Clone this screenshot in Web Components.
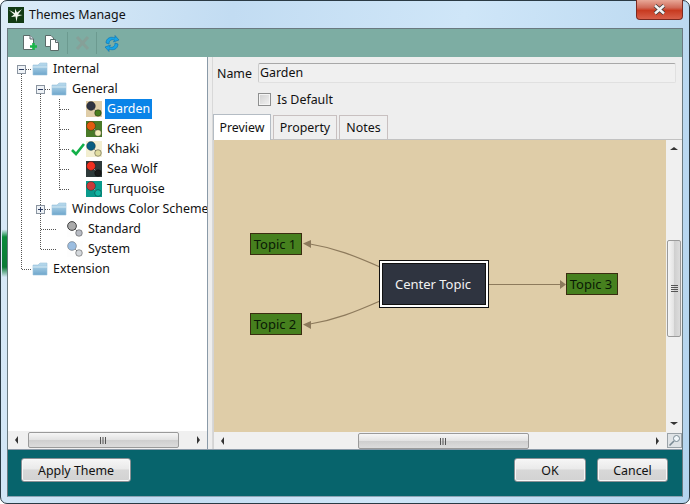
<!DOCTYPE html>
<html>
<head>
<meta charset="utf-8">
<title>Themes Manage</title>
<style>
html,body{margin:0;padding:0;width:690px;height:504px;overflow:hidden}
body{font:12.4px "Noto Sans",sans-serif;color:#111}
</style>
</head>
<body>
<theme-dialog>
    <theme-toolbar slot="toolbar"></theme-toolbar>
    <theme-tree slot="tree">
        <tree-node x="32" kind="folder">Internal</tree-node>
        <tree-node x="51" kind="folder">General</tree-node>
        <tree-node x="86" kind="theme" colors="#dfcda8,#2f3342,#4a7d1e" selected>Garden</tree-node>
        <tree-node x="86" kind="theme" colors="#4a7a28,#e25a10,#f5eebb">Green</tree-node>
        <tree-node x="86" kind="theme" colors="#f2eed0,#0a5f82,#e0dca0" checked>Khaki</tree-node>
        <tree-node x="86" kind="theme" colors="#2e3a3a,#f03020,#1a1a1a">Sea Wolf</tree-node>
        <tree-node x="86" kind="theme" colors="#0a9a8c,#c93a3a,#14b8a4">Turquoise</tree-node>
        <tree-node x="51" kind="folder">Windows Color Schemes</tree-node>
        <tree-node x="67" kind="theme" colors="#fdfdfd,#aaaaaa,#b8bcc4" dark>Standard</tree-node>
        <tree-node x="67" kind="theme" colors="#fdfdfd,#9bbde0,#d4d8dc">System</tree-node>
        <tree-node x="32" kind="folder">Extension</tree-node>
    </theme-tree>
    <theme-editor slot="editor"></theme-editor>
    <dialog-button slot="left" style="width:110px">Apply Theme</dialog-button>
    <dialog-button slot="right" style="width:72px">OK</dialog-button>
    <dialog-button slot="right" style="width:71px">Cancel</dialog-button>
</theme-dialog>

<script>
class ThemeDialog extends HTMLElement{
    constructor(){
        super()
        this.attachShadow({mode: 'open'})
        this.shadowRoot.innerHTML = `
            <style>
                :host{
                    display: flex;
                    flex-direction: column;
                    width: 690px;
                    height: 504px;
                    box-sizing: border-box;
                    position: relative;
                    border: 1px solid #2a3a44;
                    border-radius: 7px;
                    background:
                        linear-gradient(180deg, transparent 45.5%, #0a8a3a 47%, #0a7a34 53%, transparent 55%) 1px 0/5px 100% no-repeat,
                        linear-gradient(100deg, #dcecf8 0%, #c2dcf2 30%, #cfe6f8 60%, #b4d4ee 100%);
                }
                #title{
                    display: flex;
                    align-items: center;
                    height: 27px;
                    padding-left: 7px;
                    gap: 5px;
                    font-size: 12.4px;
                    color: #111;
                }
                #title svg{flex: none}
                #close{
                    position: absolute;
                    top: -1px;
                    right: 6px;
                    width: 47px;
                    height: 20px;
                    box-sizing: border-box;
                    border: 1px solid #7c2a20;
                    border-top: 0;
                    border-radius: 0 0 4px 4px;
                    background: linear-gradient(180deg, #e8a898 0%, #d06a58 40%, #c83a20 55%, #d8604a 100%);
                    display: flex;
                    align-items: center;
                    justify-content: center;
                }
                #frame{
                    display: flex;
                    flex-direction: column;
                    flex: none;
                    height: 469px;
                    margin: 0 6px 0 6px;
                    border: 1px solid #6a7a80;
                    border-bottom-color: #8ca4b4;
                    box-sizing: border-box;
                    background: #eeeeee;
                }
                #main{
                    display: flex;
                    height: 392px;
                    flex: none;
                }
                #left{
                    width: 200px;
                    flex: none;
                    background: #fff;
                    border-right: 1px solid #8a9aa8;
                    box-sizing: border-box;
                }
                #divider{width: 4px;flex: none;background: #eeeeee}
                #right{flex: 1;min-width: 0;border-left: 1px solid #d8d8d8}
                #foot{
                    flex: 1;
                    display: flex;
                    justify-content: space-between;
                    align-items: center;
                    padding: 0 14px 6px 13px;
                    background: #07646c;
                    border-top: 1px solid #8a9aa8;
                }
                #foot div{display: flex;gap: 11px}
            </style>
            <div id="title">
                <svg width="16" height="16" viewBox="0 0 16 16">
                    <rect width="16" height="16" fill="#123a14"/>
                    <path d="M1 3 L7 6 L7 1.5 L9 5.5 L14 2 L10 7.5 L14.5 8 L9.5 9.5 L8.5 15 L7.5 9.5 L3 10 L6 7.5 Z" fill="#f2f6ee"/>
                </svg>
                <span>Themes Manage</span>
            </div>
            <div id="close">
                <svg width="13" height="11" viewBox="0 0 13 11">
                    <path d="M2 1.5 L11 9.5 M11 1.5 L2 9.5" stroke="#3a3a3a" stroke-width="4"/>
                    <path d="M2 1.5 L11 9.5 M11 1.5 L2 9.5" stroke="#f4f4f4" stroke-width="2.4"/>
                </svg>
            </div>
            <div id="frame">
                <slot name="toolbar"></slot>
                <div id="main">
                    <div id="left"><slot name="tree"></slot></div>
                    <div id="divider"></div>
                    <div id="right"><slot name="editor"></slot></div>
                </div>
                <div id="foot">
                    <div><slot name="left"></slot></div>
                    <div><slot name="right"></slot></div>
                </div>
            </div>
        `
    }
}

class ThemeToolbar extends HTMLElement{
    constructor(){
        super()
        this.attachShadow({mode: 'open'})
        this.shadowRoot.innerHTML = `
            <style>
                :host{
                    display: flex;
                    align-items: center;
                    height: 28px;
                    flex: none;
                    padding-left: 14px;
                    background: #7dada3;
                    box-sizing: border-box;
                }
                svg{display: block;flex: none}
                .sep{width: 1px;height: 22px;background: #6c9a90;margin: 0 7px}
                .sep.b{margin: 0 7px 0 6px}
                .gap{width: 8px}
            </style>
            <svg width="15" height="16" viewBox="0 0 15 16">
                <path d="M1.5 .5 H8 L11.5 4 V14.5 H1.5 Z" fill="#fff" stroke="#5a6a68"/>
                <path d="M8 .5 V4 H11.5" fill="#dde" stroke="#5a6a68"/>
                <path d="M8 11.5 H15 M11.5 8 V15" stroke="#19b54a" stroke-width="2.6"/>
            </svg>
            <div class="gap"></div>
            <svg width="15" height="16" viewBox="0 0 15 16">
                <path d="M.5 .5 H6 L8.5 3 V11.5 H.5 Z" fill="#fff" stroke="#5a6a68"/>
                <path d="M5.5 4.5 H10.5 L13.5 7.5 V15.5 H5.5 Z" fill="#fff" stroke="#5a6a68"/>
                <path d="M10.5 4.5 V7.5 H13.5" fill="#dde" stroke="#5a6a68"/>
            </svg>
            <div class="sep"></div>
            <svg width="15" height="16" viewBox="0 0 15 16">
                <path d="M2 2 L13 14 M13 2 L2 14" stroke="#86a098" stroke-width="3"/>
            </svg>
            <div class="sep b"></div>
            <svg width="16" height="17" viewBox="0 0 16 17">
                <path d="M2 8 C2 3 7 1 11 3 L11 .5 L15 5 L9.5 7 L10.5 5 C8 4 5 5 5 9 Z" fill="#19a4e4" stroke="#0a70b0" stroke-width=".6"/>
                <path d="M14 9 C14 14 9 16 5 14 L5 16.5 L1 12 L6.5 10 L5.5 12 C8 13 11 12 11 8 Z" fill="#19a4e4" stroke="#0a70b0" stroke-width=".6"/>
            </svg>
        `
    }
}

class TreeNode extends HTMLElement{
    constructor(){
        super()
        this.attachShadow({mode: 'open'})
    }
    connectedCallback(){
        const x = +this.getAttribute('x') - 8
        const kind = this.getAttribute('kind')
        let icon = ''
        if(kind === 'folder'){
            icon = `<svg width="16" height="14" viewBox="0 0 16 14">
                <defs><linearGradient id="f" x1="0" y1="0" x2="0" y2="1">
                    <stop offset="0" stop-color="#bcdcee"/><stop offset="1" stop-color="#6ea6cc"/>
                </linearGradient></defs>
                <path d="M1 3 H6 L8 1 H15 V13 H1 Z" fill="url(#f)" stroke="#9cc4dc" stroke-width=".6"/>
                <path d="M1 5 H15" stroke="#d6eaf4"/>
            </svg>`
        }else{
            const [bg, a, b] = this.getAttribute('colors').split(',')
            const ring = this.hasAttribute('dark') ? '#222' : 'rgba(0,0,0,.35)'
            icon = `<svg width="16" height="16" viewBox="0 0 16 16">
                <rect width="16" height="16" fill="${bg}"/>
                <path d="M5 5 L12 12" stroke="#999" stroke-width="1"/>
                <circle cx="5" cy="5" r="4.4" fill="${a}" stroke="${ring}" stroke-width=".8"/>
                <circle cx="12" cy="12" r="3.3" fill="${b}" stroke="rgba(0,0,0,.45)" stroke-width=".8"/>
            </svg>`
        }
        const check = this.hasAttribute('checked')
            ? `<svg id="check" width="14" height="13" viewBox="0 0 14 13"><path d="M1 7 L5 11 L13 1" fill="none" stroke="#12b048" stroke-width="2.6"/></svg>`
            : ''
        this.shadowRoot.innerHTML = `
            <style>
                :host{
                    display: flex;
                    align-items: center;
                    height: 20px;
                    padding-left: ${x}px;
                    white-space: nowrap;
                    position: relative;
                }
                svg{display: block;flex: none}
                #check{position: absolute;left: ${x - 15}px;top: 4px}
                #label{
                    margin-left: 3px;
                    padding: 0 2px;
                    line-height: 20px;
                    height: 20px;
                }
                :host([selected]) #label{background: #0a84e8;color: #fff}
            </style>
            ${check}${icon}<span id="label"><slot></slot></span>
        `
    }
}

class ThemeTree extends HTMLElement{
    constructor(){
        super()
        this.attachShadow({mode: 'open'})
        const box = (x, y, plus) => `
            <rect x="${x + .5}" y="${y + .5}" width="8" height="8" fill="#eef2f6" stroke="#8a94a0"/>
            <path d="M${x + 2} ${y + 4.5} H${x + 7}${plus ? ` M${x + 4.5} ${y + 2} V${y + 7}` : ''}" stroke="#2a3a60"/>`
        this.shadowRoot.innerHTML = `
            <style>
                :host{
                    display: flex;
                    flex-direction: column;
                    height: 392px;
                    position: relative;
                }
                #nodes{
                    flex: 1;
                    min-height: 0;
                    overflow: hidden;
                    padding-top: 2px;
                }
                #lines{position: absolute;left: 0;top: 0;pointer-events: none}
                path.dot{fill: none;stroke: #555;stroke-dasharray: 1 1;shape-rendering: crispEdges}
            </style>
            <div id="nodes"><slot></slot></div>
            <svg id="lines" width="62" height="230" viewBox="8 57 62 230">
                <path class="dot" d="M21.5 74 V270 M22 269.5 H32 M26 69.5 H32 M40.5 94 V250 M41 249.5 H56 M45 89.5 H51 M45 209.5 H51 M41 229.5 H56 M59.5 99 V190 M60 109.5 H70 M60 129.5 H70 M60 149.5 H70 M60 169.5 H70 M60 189.5 H70"/>
                ${box(17, 65, false)}${box(36, 85, false)}${box(36, 205, true)}
            </svg>
            <window-scrollbar start="3" size="151"></window-scrollbar>
        `
    }
}

class WindowScrollbar extends HTMLElement{
    constructor(){
        super()
        this.attachShadow({mode: 'open'})
    }
    connectedCallback(){
        const vertical = this.hasAttribute('vertical')
        const start = this.getAttribute('start')
        const size = this.getAttribute('size')
        const a = vertical ? 'M0 3 L8 3 L4 0 Z' : 'M3 0 L3 8 L0 4 Z'
        const b = vertical ? 'M0 0 L8 0 L4 3 Z' : 'M0 0 L0 8 L3 4 Z'
        const w = vertical ? 8 : 3, h = vertical ? 3 : 8
        this.shadowRoot.innerHTML = `
            <style>
                :host{
                    display: flex;
                    flex: none;
                    flex-direction: ${vertical ? 'column' : 'row'};
                    align-items: center;
                    background: #f0f0f0;
                    box-sizing: border-box;
                    ${vertical ? 'width: 16px;' : 'height: 18px;'}
                }
                .btn{
                    flex: none;
                    ${vertical ? 'height: 17px;width: 100%;' : 'width: 17px;height: 100%;'}
                    display: flex;
                    align-items: center;
                    justify-content: center;
                }
                #track{flex: 1;align-self: stretch;min-width: 0;min-height: 0;display: flex;${vertical ? 'flex-direction: column;' : ''}}
                #thumb{
                    box-sizing: border-box;
                    ${vertical ? `margin: ${start}px 1px 0;height: ${size}px;` : `margin: 1px 0 1px ${start}px;width: ${size}px;`}
                    border: 1px solid #9a9a9a;
                    border-radius: 2px;
                    background: linear-gradient(${vertical ? '90deg' : '180deg'}, #f6f6f6, #e2e2e2 50%, #cfcfcf 52%, #dcdcdc);
                    display: flex;
                    align-items: center;
                    justify-content: center;
                }
                svg{display: block}
            </style>
            <div class="btn"><svg width="${w}" height="${h}" viewBox="0 0 ${w} ${h}"><path d="${a}" fill="#333"/></svg></div>
            <div id="track"><div id="thumb">
                ${vertical
                    ? `<svg width="7" height="7" viewBox="0 0 7 7"><path d="M0 .5 H7 M0 2.5 H7 M0 4.5 H7 M0 6.5 H7" stroke="#555"/></svg>`
                    : `<svg width="7" height="7" viewBox="0 0 7 7"><path d="M.5 0 V7 M3 0 V7 M5.5 0 V7" stroke="#555"/></svg>`}
            </div></div>
            <div class="btn"><svg width="${w}" height="${h}" viewBox="0 0 ${w} ${h}"><path d="${b}" fill="#333"/></svg></div>
        `
    }
}

class ThemeEditor extends HTMLElement{
    constructor(){
        super()
        this.attachShadow({mode: 'open'})
        this.shadowRoot.innerHTML = `
            <style>
                :host{
                    display: flex;
                    flex-direction: column;
                    height: 392px;
                    box-sizing: border-box;
                }
                #nameRow{
                    display: flex;
                    align-items: center;
                    height: 20px;
                    margin: 6px 6px 0 4px;
                    gap: 6px;
                }
                #input{
                    flex: 1;
                    height: 20px;
                    box-sizing: border-box;
                    border: 1px solid #e0e0e0;
                    border-top-color: #a8a8a8;
                    border-left-color: #cccccc;
                    border-radius: 2px;
                    padding-left: 1px;
                    line-height: 18px;
                    background: #f0f0f0;
                }
                #defaultRow{
                    display: flex;
                    align-items: center;
                    gap: 6px;
                    height: 16px;
                    margin: 8px 0 0 45px;
                }
                #box{
                    width: 13px;
                    height: 13px;
                    box-sizing: border-box;
                    border: 1px solid #8e8f8f;
                    background: linear-gradient(135deg, #d0d0d0, #f2f2f2);
                    box-shadow: inset 0 0 0 1px #f4f4f4;
                }
                #tabs{
                    display: flex;
                    align-items: flex-end;
                    height: 25px;
                    margin-top: 7px;
                    padding-left: 0;
                    gap: 2px;
                    border-bottom: 1px solid #c2c2c2;
                }
                .tab{
                    height: 24px;
                    box-sizing: border-box;
                    border: 1px solid #c8c0c0;
                    border-bottom: 0;
                    background: #efefef;
                    display: flex;
                    align-items: center;
                    justify-content: center;
                }
                .tab.on{height: 26px;margin-bottom: -1px;background: #fff;border-color: #b4bcc4}
                #body{
                    display: grid;
                    grid-template-columns: 1fr 16px;
                    grid-template-rows: 1fr 17px;
                    flex: 1;
                    min-height: 0;
                    border-left: 1px solid #d4d4d4;
                }
                #corner{
                    display: flex;
                    align-items: center;
                    justify-content: center;
                    background: #f0f0f0;
                }
                #corner svg{display: block}
            </style>
            <div id="nameRow"><span>Name</span><div id="input">Garden</div></div>
            <div id="defaultRow"><div id="box"></div><span>Is Default</span></div>
            <div id="tabs">
                <div class="tab on" style="width:58px">Preview</div>
                <div class="tab" style="width:64px">Property</div>
                <div class="tab" style="width:49px">Notes</div>
            </div>
            <div id="body">
                <map-preview></map-preview>
                <window-scrollbar vertical start="83" size="97"></window-scrollbar>
                <window-scrollbar start="127" size="171"></window-scrollbar>
                <div id="corner">
                    <svg width="15" height="15" viewBox="0 0 15 15">
                        <rect x=".5" y=".5" width="14" height="14" fill="#dfe3e6" stroke="#9aa2a8"/>
                        <circle cx="9.5" cy="5.5" r="3" fill="#f0f6fa" stroke="#7a8a94"/>
                        <path d="M7 8 L2.5 12.5" stroke="#7a8a94" stroke-width="1.6"/>
                    </svg>
                </div>
            </div>
        `
    }
}

class MapTopic extends HTMLElement{
    constructor(){
        super()
        this.attachShadow({mode: 'open'})
        this.shadowRoot.innerHTML = `
            <style>
                :host{
                    position: absolute;
                    display: flex;
                    align-items: center;
                    justify-content: center;
                    box-sizing: border-box;
                    width: 52px;
                    height: 22px;
                    padding: 0 2px 1px 0;
                    background: #46801e;
                    border: 1px solid #3a2c10;
                    color: #0a1a05;
                    font-size: 13px;
                    white-space: nowrap;
                }
                :host([center]){
                    width: 108px;
                    height: 46px;
                    background: #2f3440;
                    border: 2px solid #fff;
                    outline: 1px solid #111;
                    outline-offset: -3px;
                    box-shadow: 0 0 0 1px #111;
                    color: #f2f2f2;
                }
            </style>
            <slot></slot>
        `
    }
}

class MapPreview extends HTMLElement{
    constructor(){
        super()
        this.attachShadow({mode: 'open'})
        this.shadowRoot.innerHTML = `
            <style>
                :host{
                    display: block;
                    position: relative;
                    background: #dfcda8;
                    overflow: hidden;
                    min-height: 0;
                }
                svg{position: absolute;left: 0;top: 0}
            </style>
            <svg width="451" height="291" viewBox="214 140 451 291">
                <g fill="none" stroke="#8d7a5c" stroke-width="1.2">
                    <path d="M380 267 C355 256 335 248 310 244"/>
                    <path d="M380 301 C355 312 335 320 310 324"/>
                    <path d="M488 284.5 H560"/>
                </g>
                <g fill="#8d7a5c">
                    <path d="M303 243.5 L311 240 L311 248 Z"/>
                    <path d="M303 324.5 L311 321 L311 329 Z"/>
                    <path d="M566 284.5 L560 280 L560 289 Z"/>
                </g>
            </svg>
            <map-topic style="left:36px;top:93px">Topic 1</map-topic>
            <map-topic style="left:36px;top:173px">Topic 2</map-topic>
            <map-topic center style="left:166px;top:121px">Center Topic</map-topic>
            <map-topic style="left:352px;top:133px">Topic 3</map-topic>
        `
    }
}

class DialogButton extends HTMLElement{
    constructor(){
        super()
        this.attachShadow({mode: 'open'})
        this.shadowRoot.innerHTML = `
            <style>
                :host{
                    display: flex;
                    align-items: center;
                    justify-content: center;
                    height: 24px;
                    box-sizing: border-box;
                    border: 1px solid #8a9094;
                    border-radius: 3px;
                    background: linear-gradient(180deg, #f6f6f6, #eaeaea 45%, #d8d8d8 50%, #d2d2d2);
                    box-shadow: inset 0 0 0 1px #f8f8f8;
                    color: #111;
                }
            </style>
            <slot></slot>
        `
    }
}

customElements.define('theme-dialog', ThemeDialog)
customElements.define('theme-toolbar', ThemeToolbar)
customElements.define('tree-node', TreeNode)
customElements.define('theme-tree', ThemeTree)
customElements.define('window-scrollbar', WindowScrollbar)
customElements.define('theme-editor', ThemeEditor)
customElements.define('map-topic', MapTopic)
customElements.define('map-preview', MapPreview)
customElements.define('dialog-button', DialogButton)
</script>
</body>
</html>
